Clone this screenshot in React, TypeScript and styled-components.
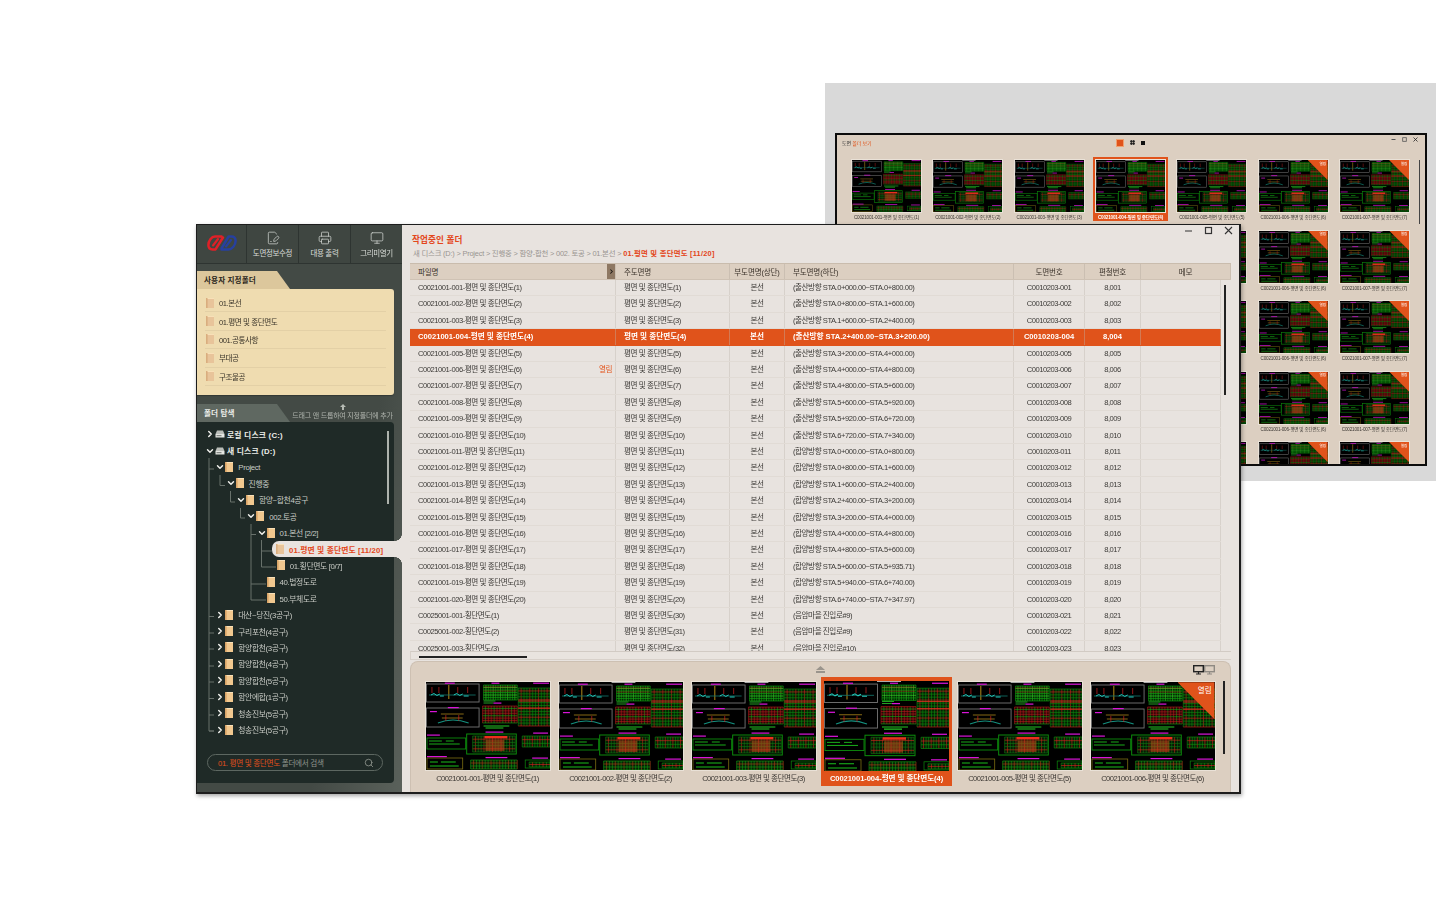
import React from "react";
import styled, { createGlobalStyle } from "styled-components";
import { ChevronDown, ChevronRight, FilePenLine, Monitor, Printer, Search } from "lucide-react";

const FONT = `"Liberation Sans", "Noto Sans CJK KR", sans-serif`;
const ORANGE = "#e0531b";
const CREAM = "#e8e3df";
const TAN = "#dccfc1";

const GlobalStyle = createGlobalStyle`
  html, body { margin: 0; padding: 0; background: #fff; }
  body { font-family: ${FONT}; font-size: 8px; }
  * { box-sizing: border-box; }
`;

const Canvas = styled.div`
  position: relative;
  width: 1450px;
  height: 900px;
  background: #fff;
  overflow: hidden;
`;
const Backdrop = styled.div`
  position: absolute;
  left: 825px;
  top: 83px;
  width: 611px;
  height: 398px;
  background: #d9d9d9;
`;
const HiddenDefs = styled.svg`
  position: absolute;
  width: 0;
  height: 0;
`;

/* ---------- CAD drawing ---------- */
function gridLines(x: number, y: number, w: number, h: number, cols: number, rows: number, c1: string, c2: string) {
  const out: React.ReactElement[] = [];
  for (let i = 0; i <= cols; i++) {
    const px = x + (w * i) / cols;
    out.push(<line key={"c" + i} x1={px} y1={y} x2={px} y2={y + h} stroke={i % 3 === 1 ? c2 : c1} strokeWidth={0.55} />);
  }
  for (let i = 0; i <= rows; i++) {
    const py = y + (h * i) / rows;
    out.push(<line key={"r" + i} x1={x} y1={py} x2={x + w} y2={py} stroke={i % 3 === 1 ? c2 : c1} strokeWidth={0.6} />);
  }
  return (
    <g key={`${x}-${y}`}>
      <rect x={x} y={y} width={w} height={h} fill={c1} opacity={0.22} />
      {out}
    </g>
  );
}

const labels = [
  [19, 0.6, 10], [66, 0.6, 8], [108, 0.6, 16], [22, 25, 11], [4, 29, 7], [68, 20.5, 8],
  [1, 52.5, 13], [60, 49.5, 18], [108, 50.5, 15], [1, 74, 20], [60, 75, 22], [107, 75.5, 16],
];

const CadDefs = () => (
  <HiddenDefs aria-hidden="true">
    <symbol id="cad-sheet" viewBox="0 0 125 88" overflow="visible">
      <rect x="0.5" y="2" width="53" height="18" fill="none" stroke="#767676" strokeWidth="0.9" />
      <rect x="0.5" y="26" width="53" height="19" fill="none" stroke="#767676" strokeWidth="0.9" />
      <path d="M6 5 V11 M13 5 V11 M32 5 V11 M42 5 V11" stroke="#b52020" strokeWidth="0.8" />
      <path d="M23 3 V17" stroke="#b58a18" strokeWidth="1" />
      <path d="M3 13 H50" stroke="#127a70" strokeWidth="0.8" />
      <path d="M5 13 l3 -1.5 l3 2 l3 -1.5 M14 14 h4 M28 13 l3 -1.5 l3 2 l3 -1.5 M38 14 h5" stroke="#27c9bb" strokeWidth="1" fill="none" />
      <path d="M12 41 Q27 35 43 41" stroke="#14907f" strokeWidth="1.1" fill="none" />
      <path d="M15 32 H38 M16 36 H37" stroke="#a8851a" strokeWidth="0.8" />
      <path d="M20 33 V39 M33 33 V39" stroke="#c22" strokeWidth="0.7" />
      {gridLines(58, 3, 34, 15, 14, 6, "#0fa80f", "#3bdc2b")}
      <path d="M58 5 H91 M58 9 H91" stroke="#b8261c" strokeWidth="0.5" />
      <path d="M58 19 H70 M58 21 H68" stroke="#2bc92b" strokeWidth="0.8" />
      {gridLines(57, 24, 35, 17, 12, 7, "#b81c1c", "#12a812")}
      <path d="M58 44 H84 M60 46 H78" stroke="#25c825" strokeWidth="1.1" />
      {gridLines(93, 6, 32, 38, 11, 13, "#0e900e", "#d82020")}
      <path d="M93 19 H125 M93 26 H125" stroke="#e43324" strokeWidth="0.8" />
      <rect x="1" y="56" width="39" height="11" fill="none" stroke="#0c8c0c" strokeWidth="0.9" />
      <path d="M3 59 H16 M3 62 H34 M20 59 H28" stroke="#1bc01b" strokeWidth="0.9" />
      <rect x="41" y="52" width="50" height="20" fill="none" stroke="#0c8c0c" strokeWidth="1" />
      {gridLines(47, 54, 43, 16, 15, 5, "#127c12", "#d02a1a")}
      <rect x="59" y="54" width="23" height="2.4" fill="#ee2e1e" />
      <rect x="60" y="58" width="19" height="11" fill="#c8421a" opacity="0.55" />
      {gridLines(97, 54, 28, 11, 11, 3, "#0f960f", "#e02020")}
      <rect x="1" y="76" width="36" height="11" fill="none" stroke="#7c6e12" strokeWidth="0.8" />
      <path d="M4 80 H12 M15 80 H30 M4 84 H33" stroke="#1bbf1b" strokeWidth="1" />
      {gridLines(45, 78, 47, 9, 16, 3, "#14a014", "#b83a1a")}
      <rect x="100" y="78" width="25" height="8" fill="none" stroke="#0c8c0c" strokeWidth="0.7" />
      {gridLines(104, 80, 21, 5, 6, 2, "#0f960f", "#e02020")}
      {labels.map(([x, y, w], i) => (
        <rect key={i} x={x} y={y} width={w} height={1.2} fill="#d914d9" />
      ))}
    </symbol>
  </HiddenDefs>
);

const SheetSvg = styled.svg`
  display: block;
  width: 100%;
  height: 100%;
  background: #000;
`;
const CadSheet = ({ first }: { first?: boolean }) => (
  <SheetSvg viewBox="0 0 125 88" preserveAspectRatio="none">
    {!first && <rect x="53" y="0" width="24" height="0.9" fill="#bbb" />}
    <use href="#cad-sheet" x="0" y={first ? 0 : 1} width="125" height="88" />
  </SheetSvg>
);

/* ---------- thumbnails ---------- */
const ThumbFrame = styled.div<{ $h: number; $edge: number }>`
  position: relative;
  height: ${(p) => p.$h}px;
  border: ${(p) => p.$edge}px solid #e9e1d7;
  overflow: hidden;
`;
const Corner = styled.div<{ $size: number; $font: number }>`
  position: absolute;
  top: 0;
  right: 0;
  width: ${(p) => p.$size}px;
  height: ${(p) => p.$size}px;
  background: ${ORANGE};
  clip-path: polygon(0 0, 100% 0, 100% 100%);
  color: #fff;
  font-size: ${(p) => p.$font}px;
  text-align: right;
  padding: ${(p) => p.$size * 0.13}px ${(p) => p.$size * 0.08}px 0 0;
  line-height: 1;
`;
const ThumbItem = styled.div<{ $active?: boolean }>`
  width: 131px;
  height: 109px;
  padding: 4px ${(p) => (p.$active ? 3 : 2.5)}px 0;
  background: ${(p) => (p.$active ? ORANGE : "transparent")};
`;
const ThumbLabel = styled.div<{ $active?: boolean }>`
  margin-top: 2px;
  text-align: center;
  white-space: nowrap;
  font-size: 7.6px;
  line-height: 12px;
  letter-spacing: ${(p) => (p.$active ? "-0.08px" : "-0.5px")};
  font-weight: ${(p) => (p.$active ? 700 : 400)};
  color: ${(p) => (p.$active ? "#fff" : "#3b3733")};
`;
const MiniItem = styled.div<{ $active?: boolean }>`
  width: 75px;
  height: 64px;
  padding: 2px 2px 0;
  background: ${(p) => (p.$active ? ORANGE : "transparent")};
`;
const MiniLabel = styled.div<{ $active?: boolean }>`
  margin-top: 1px;
  text-align: center;
  white-space: nowrap;
  font-size: 4.6px;
  line-height: 7px;
  letter-spacing: -0.18px;
  font-weight: ${(p) => (p.$active ? 700 : 400)};
  color: ${(p) => (p.$active ? "#fff" : "#3b3733")};
`;

/* ---------- back window ---------- */
const BackWindow = styled.section`
  position: absolute;
  left: 835px;
  top: 133px;
  width: 592px;
  height: 333px;
  border: 2px solid #0c0c0c;
  background: ${TAN};
  overflow: hidden;
  filter: blur(0.25px);
`;
const BackHeader = styled.header`
  display: grid;
  grid-template-columns: 274px auto 1fr auto;
  align-items: center;
  height: 22px;
  padding: 0 7px 7px 5px;
`;
const BackTitle = styled.div`
  font-size: 5px;
  letter-spacing: -0.1px;
  color: #333;
  white-space: nowrap;
  span { color: ${ORANGE}; }
`;
const ViewSwitch = styled.div`
  display: flex;
  align-items: center;
  gap: 6px;
`;
const ViewActive = styled.span`
  width: 8px;
  height: 8px;
  background: ${ORANGE};
  border: 1px solid #f0a070;
`;
const ViewDots = styled.span`
  width: 5px;
  height: 5px;
  background: radial-gradient(circle, #111 1.1px, transparent 1.2px) 0 0 / 2.5px 2.5px;
`;
const ViewSquare = styled.span`
  width: 4px;
  height: 4px;
  background: #111;
`;
const BackControls = styled.div`
  display: flex;
  align-items: center;
  gap: 6px;
  color: #555;
  margin-bottom: 7px;
`;
const BackGrid = styled.div`
  display: grid;
  grid-template-columns: repeat(7, 75px);
  grid-auto-rows: 64px;
  column-gap: 6.33px;
  row-gap: 6.5px;
  padding-left: 12px;
`;
const BackScroll = styled.div`
  position: absolute;
  left: 582px;
  top: 25px;
  width: 1px;
  height: 64px;
  background: #444;
`;

const BackThumb = ({ n, active, open, label }: { n: number; active?: boolean; open?: boolean; label?: boolean }) => (
  <MiniItem $active={active}>
    <ThumbFrame $h={54} $edge={1}>
      <CadSheet first={n === 1} />
      {open && <Corner $size={20} $font={3.6}>열림</Corner>}
    </ThumbFrame>
    {label && <MiniLabel $active={active}>C0021001-00{n}-평면 및 종단면도({n})</MiniLabel>}
  </MiniItem>
);

const BackView = () => (
  <BackWindow>
    <BackHeader>
      <BackTitle>도면 <span>폴더 보기</span></BackTitle>
      <ViewSwitch>
        <ViewActive />
        <ViewDots />
        <ViewSquare />
      </ViewSwitch>
      <span />
      <BackControls>
        <svg width="5" height="5" viewBox="0 0 5 5" stroke="currentColor"><path d="M0.5 2.5 H4.5" /></svg>
        <svg width="5" height="5" viewBox="0 0 5 5" stroke="currentColor" fill="none"><rect x="0.7" y="0.7" width="3.6" height="3.6" strokeWidth="0.8" /></svg>
        <svg width="5" height="5" viewBox="0 0 5 5" stroke="#222"><path d="M0.5 0.5 L4.5 4.5 M4.5 0.5 L0.5 4.5" strokeWidth="0.8" /></svg>
      </BackControls>
    </BackHeader>
    <BackGrid>
      {Array.from({ length: 35 }).map((_, i) => {
        const col = i % 7;
        const row = Math.floor(i / 7);
        // rows below the first sit behind the front window, only the last two columns show
        const visible = row === 0 || (col >= 5 && row < 4);
        return <BackThumb key={i} n={col + 1} active={i === 3} open={col >= 5} label={visible} />;
      })}
    </BackGrid>
    <BackScroll />
  </BackWindow>
);

/* ---------- front window ---------- */
const FrontWindow = styled.section`
  position: absolute;
  left: 196px;
  top: 224px;
  width: 1045px;
  height: 570px;
  display: flex;
  border: 1px solid #1d1d1d;
  border-width: 1px 2px 2px 1px;
  background: ${CREAM};
  box-shadow: 1px 2px 4px rgba(0, 0, 0, 0.35);
  filter: blur(0.25px);
`;
const Sidebar = styled.aside`
  width: 205px;
  flex: none;
  display: flex;
  flex-direction: column;
  background: linear-gradient(100deg, #434a45 70%, #5a615b);
`;
const Toolbar = styled.div`
  display: grid;
  grid-template-columns: 49px 52px 52px 52px;
  height: 39px;
  background: #3f4641;
  border-bottom: 1px solid #2e3431;
`;
const LogoCell = styled.div`
  display: flex;
  align-items: center;
  justify-content: center;
  padding-bottom: 3px;
`;
const ToolButton = styled.div`
  display: flex;
  flex-direction: column;
  align-items: center;
  padding-top: 6px;
  gap: 4px;
  border-left: 1px solid #2e3431;
  color: #d9ddd8;
  font-size: 7.5px;
  letter-spacing: -0.35px;
  line-height: 9px;
  white-space: nowrap;
  svg { color: #cfd4cf; }
`;
const Tab = styled.div<{ $bg: string; $fg: string }>`
  width: 93px;
  height: 18px;
  padding: 5px 0 0 7px;
  font-size: 7.6px;
  line-height: 10px;
  font-weight: 700;
  letter-spacing: 0.1px;
  white-space: nowrap;
  color: ${(p) => p.$fg};
  background: ${(p) => p.$bg};
  border-top-right-radius: 6px;
  clip-path: polygon(0 0, 86% 0, 100% 100%, 0 100%);
`;
const FavTabRow = styled.div`
  margin-top: 7px;
`;
const FavPanel = styled.div`
  width: 197px;
  height: 106px;
  padding: 5px 8px 0;
  background: #efdcb0;
  border-radius: 0 3px 3px 0;
  box-shadow: 0 1px 1px rgba(0, 0, 0, 0.25);
`;
const FavRow = styled.div`
  display: flex;
  align-items: center;
  gap: 5px;
  height: 18.4px;
  padding-left: 1px;
  border-bottom: 1px solid #e3d0a6;
  color: #3b352a;
  font-size: 7.6px;
  letter-spacing: -0.45px;
`;
const TreeTabRow = styled.div`
  display: flex;
  margin-top: 9px;
`;
const Hint = styled.div`
  flex: 1;
  display: flex;
  flex-direction: column;
  align-items: center;
  color: #aeb3ac;
  font-size: 7px;
  letter-spacing: -0.2px;
  line-height: 9px;
  white-space: nowrap;
  padding-right: 7px;
  svg { display: block; margin-bottom: 1px; }
`;
const TreePanel = styled.div`
  position: relative;
  width: 197px;
  height: 361px;
  display: flex;
  flex-direction: column;
  padding-top: 6px;
  background: #1f2a27;
  border-radius: 0 4px 4px 0;
`;
const TreeLines = styled.svg`
  position: absolute;
  left: 0;
  top: 0;
  width: 197px;
  height: 361px;
  pointer-events: none;
`;
const TreeList = styled.div`
  position: relative;
  flex: 1;
  margin-top: -2px;
`;
const TreeRow = styled.div<{ $depth: number; $selected?: boolean; $strong?: boolean }>`
  position: relative;
  display: flex;
  align-items: center;
  height: 16.42px;
  padding-left: ${(p) => 8 + p.$depth * 10.3}px;
  white-space: nowrap;
  font-size: 7.8px;
  letter-spacing: ${(p) => (p.$strong ? "0.2px" : p.$selected ? "0.12px" : "-0.35px")};
  font-weight: ${(p) => (p.$strong || p.$selected ? 700 : 400)};
  color: ${(p) => (p.$selected ? "#e3461a" : p.$strong ? "#eceee9" : "#c9ccc6")};
  ${(p) =>
    p.$selected &&
    `
    margin-left: 75px;
    margin-right: -8px;
    padding-left: 4px;
    background: ${CREAM};
    border-radius: 7px 0 0 7px;
    &::before, &::after {
      content: "";
      position: absolute;
      right: 0;
      width: 7px;
      height: 7px;
    }
    &::before { top: -7px; background: radial-gradient(circle at 0 0, transparent 6.6px, ${CREAM} 7px); }
    &::after { bottom: -7px; background: radial-gradient(circle at 0 100%, transparent 6.6px, ${CREAM} 7px); }
  `}
`;
const Caret = styled.span`
  flex: none;
  width: 10px;
  display: flex;
  justify-content: center;
  color: #f2f2ee;
`;
const RowLabel = styled.span<{ $tight?: boolean }>`
  margin-left: ${(p) => (p.$tight ? 2 : 5)}px;
`;
const TreeScroll = styled.div`
  position: absolute;
  left: 190px;
  top: 9px;
  width: 2px;
  height: 73px;
  background: #aeb3ad;
`;
const SearchBox = styled.div`
  display: flex;
  align-items: center;
  justify-content: space-between;
  width: 176px;
  height: 17px;
  margin: 0 0 12px 10px;
  padding: 0 8px 0 10px;
  border: 1px solid #5d6761;
  border-radius: 9px;
  font-size: 7.6px;
  letter-spacing: -0.3px;
  color: #8f958e;
  white-space: nowrap;
  b { font-weight: 400; color: #e0501c; }
  svg { color: #8f958e; }
`;

const Main = styled.main`
  position: relative;
  flex: 1;
  min-width: 0;
  display: flex;
  flex-direction: column;
  padding: 0 8px 0 8px;
  background: ${CREAM};
`;
const Heading = styled.div`
  height: 38px;
  padding: 10px 0 0 2px;
`;
const HeadingTitle = styled.div`
  color: #e3461a;
  font-weight: 700;
  font-size: 8.6px;
  line-height: 11px;
  letter-spacing: 0.1px;
`;
const Crumbs = styled.div`
  margin: 3px 0 0 1px;
  color: #989490;
  font-size: 7.4px;
  line-height: 10px;
  letter-spacing: -0.2px;
  white-space: nowrap;
  b { color: #e3461a; letter-spacing: 0.22px; }
`;
const WindowControls = styled.div`
  position: absolute;
  right: 6px;
  top: 1px;
  display: flex;
  gap: 11px;
  color: #333;
`;
const TableBox = styled.div`
  position: relative;
  height: 389px;
  overflow: hidden;
`;
const COLUMNS = "206px 114px 55px 229px 71px 56px 1fr";
const HeadRow = styled.div`
  display: grid;
  grid-template-columns: 206px 114px 55px 229px 71px 56px 90px;
  height: 17px;
  background: ${TAN};
  border-top: 1px solid #c9bcad;
  border-bottom: 1px solid #cfc2b4;
`;
const HeadCell = styled.div<{ $center?: boolean }>`
  display: flex;
  align-items: center;
  justify-content: ${(p) => (p.$center ? "center" : "flex-start")};
  padding-left: ${(p) => (p.$center ? 0 : 8)}px;
  border-right: 1px solid #cbbfb2;
  font-size: 7.6px;
  letter-spacing: -0.2px;
  color: #3b332b;
  white-space: nowrap;
`;
const NameHead = styled(HeadCell)`
  justify-content: space-between;
  padding-right: 0;
`;
const ColToggle = styled.span`
  width: 8px;
  height: 100%;
  display: flex;
  align-items: center;
  justify-content: center;
  background: #8e7863;
  color: #1b1612;
`;
const DataRow = styled.div<{ $active?: boolean }>`
  display: grid;
  grid-template-columns: ${COLUMNS};
  width: 811px;
  height: 16.42px;
  background: ${(p) => (p.$active ? ORANGE : "transparent")};
  border-bottom: 1px solid ${(p) => (p.$active ? ORANGE : "#e1dbd5")};
  color: ${(p) => (p.$active ? "#fff" : "#3c3a37")};
  font-weight: ${(p) => (p.$active ? 700 : 400)};
  font-size: 7.6px;
  letter-spacing: ${(p) => (p.$active ? "0" : "-0.46px")};
  line-height: 16px;
`;
const Cell = styled.div<{ $center?: boolean }>`
  display: flex;
  justify-content: ${(p) => (p.$center ? "center" : "space-between")};
  padding: ${(p) => (p.$center ? "0" : "0 3px 0 8px")};
  border-right: 1px solid rgba(190, 182, 172, 0.4);
  white-space: nowrap;
  overflow: hidden;
  em { font-style: normal; color: #e3561f; }
`;
const TableScroll = styled.div`
  position: absolute;
  right: 5px;
  top: 22px;
  width: 2px;
  height: 110px;
  background: #222;
`;
const HScroll = styled.div`
  height: 9px;
  padding: 4px 0 0 8px;
  background: #e9e4df;
  border-top: 1px solid #d2cbc4;
  border-bottom: 1px solid #d8d1ca;
  border-left: 1px solid #d8d1ca;
  width: 821px;
`;
const HScrollThumb = styled.div`
  width: 108px;
  height: 1.5px;
  background: #222;
`;
const ThumbPanel = styled.div`
  position: relative;
  height: 131px;
  margin-top: 1px;
  background: ${TAN};
  border: 1px solid #cdc0b2;
  border-bottom: 0;
  border-radius: 8px 8px 0 0;
`;
const PanelTop = styled.div`
  display: grid;
  grid-template-columns: 1fr auto 1fr;
  align-items: center;
  height: 15px;
`;
const Eject = styled.svg`
  grid-column: 2;
  width: 9px;
  height: 7px;
`;
const ScreenPair = styled.div`
  justify-self: end;
  display: flex;
  margin-right: 15px;
  svg:first-child { color: #222; }
  svg:last-child { color: #8f8a83; }
`;
const ThumbStrip = styled.div`
  display: flex;
  gap: 2px;
  padding-left: 11px;
`;
const PanelScroll = styled.div`
  position: absolute;
  right: 5px;
  top: 19px;
  width: 2px;
  height: 73px;
  background: #222;
`;

const FolderSvg = styled.svg`
  flex: none;
  display: block;
`;
const Folder = ({ soft }: { soft?: boolean }) => (
  <FolderSvg width="8" height="10" viewBox="0 0 8 10">
    <rect width="8" height="10" fill={soft ? "#e8c49a" : "#f1c88f"} />
    <rect width="1.6" height="10" fill={soft ? "#d9ad7e" : "#d9a468"} />
    <rect x="1.6" y="0" width="6.4" height="1" fill="#f8e0b8" />
  </FolderSvg>
);
const Disk = () => (
  <FolderSvg width="10" height="8" viewBox="0 0 10 8">
    <path d="M2 0.5 H8 L9.5 4 H0.5 Z" fill="#b9bdb8" />
    <rect x="0.5" y="4" width="9" height="3.5" fill="#e4e6e2" />
    <rect x="1.5" y="5.2" width="5" height="1" fill="#6b716c" />
  </FolderSvg>
);
const Logo = () => (
  <svg width="30" height="16" viewBox="0 0 30 16" fill="none" strokeLinejoin="round" strokeLinecap="round">
    <path d="M14.5 1.6 H8 C4.5 1.6 1.4 6 1.4 10 C1.4 13 3 14.4 5.6 14.4 H8.5 L16 2.5" stroke="#e02027" strokeWidth="2.5" />
    <path d="M6 10.5 L11 4" stroke="#e02027" strokeWidth="2.1" />
    <path d="M14.5 14.4 H21.5 C25 14.4 28.6 10 28.6 6 C28.6 3 27 1.6 24.4 1.6 H21.5 L14.5 13.5" stroke="#27409f" strokeWidth="2.5" />
    <path d="M19 11.5 L24 5" stroke="#27409f" strokeWidth="2.1" />
  </svg>
);
const Screen = () => (
  <svg width="11" height="10" viewBox="0 0 11 10" fill="none" stroke="currentColor">
    <rect x="0.7" y="0.7" width="9.6" height="6" strokeWidth="1.4" />
    <path d="M3 9 H8 M5.5 7 V9" strokeWidth="1.2" />
  </svg>
);

const favourites = ["01.본선", "01.평면 및 종단면도", "001.공통사항", "부대공", "구조물공"];

type Node = { label: string; depth: number; open?: boolean; leaf?: boolean; disk?: boolean; selected?: boolean };
const tree: Node[] = [
  { label: "로컬 디스크 (C:)", depth: 0, disk: true },
  { label: "새 디스크 (D:)", depth: 0, disk: true, open: true },
  { label: "Project", depth: 1, open: true },
  { label: "진행중", depth: 2, open: true },
  { label: "함양~합천4공구", depth: 3, open: true },
  { label: "002.토공", depth: 4, open: true },
  { label: "01.본선 [2/2]", depth: 5, open: true },
  { label: "01.평면 및 종단면도 [11/20]", depth: 6, leaf: true, selected: true },
  { label: "01.횡단면도 [0/7]", depth: 6, leaf: true },
  { label: "40.법정도로", depth: 5, leaf: true },
  { label: "50.부체도로", depth: 5, leaf: true },
  { label: "대산~당진(3공구)", depth: 1 },
  { label: "구리포천(4공구)", depth: 1 },
  { label: "함양합천(3공구)", depth: 1 },
  { label: "함양합천(4공구)", depth: 1 },
  { label: "함양합천(5공구)", depth: 1 },
  { label: "함안에합(1공구)", depth: 1 },
  { label: "청송진보(5공구)", depth: 1 },
  { label: "청송진보(5공구)", depth: 1 },
];

const sta = (from: string, to: string) => `STA.${from}~STA.${to}`;
const lower = [
  `(출산방향 ${sta("0+000.00", "0+800.00")})`,
  `(출산방향 ${sta("0+800.00", "1+600.00")})`,
  `(출산방향 ${sta("1+600.00", "2+400.00")})`,
  `(출산방향 ${sta("2+400.00", "3+200.00")})`,
  `(출산방향 ${sta("3+200.00", "4+000.00")})`,
  `(출산방향 ${sta("4+000.00", "4+800.00")})`,
  `(출산방향 ${sta("4+800.00", "5+600.00")})`,
  `(출산방향 ${sta("5+600.00", "5+920.00")})`,
  `(출산방향 ${sta("5+920.00", "6+720.00")})`,
  `(출산방향 ${sta("6+720.00", "7+340.00")})`,
  `(합양방향 ${sta("0+000.00", "0+800.00")})`,
  `(합양방향 ${sta("0+800.00", "1+600.00")})`,
  `(합양방향 ${sta("1+600.00", "2+400.00")})`,
  `(합양방향 ${sta("2+400.00", "3+200.00")})`,
  `(합양방향 ${sta("3+200.00", "4+000.00")})`,
  `(합양방향 ${sta("4+000.00", "4+800.00")})`,
  `(합양방향 ${sta("4+800.00", "5+600.00")})`,
  `(합양방향 ${sta("5+600.00", "5+935.71")})`,
  `(합양방향 ${sta("5+940.00", "6+740.00")})`,
  `(합양방향 ${sta("6+740.00", "7+347.97")})`,
  "(음암마을 진입로#9)",
  "(음암마을 진입로#9)",
  "(음암마을 진입로#10)",
];
const pad = (n: number) => String(n).padStart(3, "0");
const rows = lower.map((text, i) => {
  const n = i + 1;
  const late = n > 20;
  return {
    file: late ? `C0025001-${pad(n - 20)}-횡단면도(${n - 20})` : `C0021001-${pad(n)}-평면 및 종단면도(${n})`,
    main: `평면 및 종단면도(${late ? n + 9 : n})`,
    upper: "본선",
    lower: text,
    code: `C0010203-${pad(n)}`,
    serial: `8,${pad(n)}`,
    open: n === 6,
  };
});

const TreeConnectors = () => {
  const x = (v: number) => v - 197;
  const y = (v: number) => v - 421;
  const branch = (vx: number, from: number, to: number, endX: number) =>
    `M${x(vx)} ${y(from)} V${y(to)} H${x(endX)}`;
  const stubs = [468, 615.5, 632, 648, 665, 681, 697.5, 714, 730];
  return (
    <TreeLines fill="none" stroke="#68716b" strokeWidth="1">
      <path d={branch(209, 457, 730, 214)} />
      {stubs.map((v) => (
        <path key={v} d={`M${x(209)} ${y(v)} H${x(214)}`} />
      ))}
      <path d={branch(220, 474, 484.5, 225)} />
      <path d={branch(230.5, 490, 501, 235)} />
      <path d={branch(240.5, 507, 517, 245)} />
      <path d={branch(251, 523, 599, 266)} />
      <path d={`M251 533.5 H256 M251 583 H266`} transform={`translate(-197 -421)`} />
      <path d={branch(261.5, 539, 566, 276)} />
      <path d={`M261.5 550 H272`} transform={`translate(-197 -421)`} />
    </TreeLines>
  );
};

const Row = ({ node }: { node: Node }) => (
  <TreeRow $depth={node.depth} $selected={node.selected} $strong={node.disk}>
    {!node.leaf && (
      <Caret>
        {node.open ? <ChevronDown size={10} strokeWidth={3.4} /> : <ChevronRight size={10} strokeWidth={3.4} />}
      </Caret>
    )}
    {node.leaf && !node.selected && <Caret />}
    {node.disk ? <Disk /> : <Folder soft={node.selected} />}
    <RowLabel $tight={node.disk}>{node.label}</RowLabel>
  </TreeRow>
);

const FrontView = () => (
  <FrontWindow>
    <Sidebar>
      <Toolbar>
        <LogoCell><Logo /></LogoCell>
        <ToolButton><FilePenLine size={14} strokeWidth={1.3} />도면정보수정</ToolButton>
        <ToolButton><Printer size={14} strokeWidth={1.3} />대용 출력</ToolButton>
        <ToolButton><Monitor size={14} strokeWidth={1.3} />그리미열기</ToolButton>
      </Toolbar>
      <FavTabRow>
        <Tab $bg="#dcc79c" $fg="#2c2820">사용자 지정폴더</Tab>
      </FavTabRow>
      <FavPanel>
        {favourites.map((f) => (
          <FavRow key={f}><Folder soft />{f}</FavRow>
        ))}
      </FavPanel>
      <TreeTabRow>
        <Tab $bg="#5f6861" $fg="#eceee9">폴더 탐색</Tab>
        <Hint>
          <svg width="6" height="6" viewBox="0 0 6 6" fill="#b5bab3"><path d="M3 0 L6 3 H4 V6 H2 V3 H0 Z" /></svg>
          드래그 앤 드롭하여 지정폴더에 추가
        </Hint>
      </TreeTabRow>
      <TreePanel>
        <TreeConnectors />
        <TreeList>
          {tree.map((node, i) => (
            <Row key={i} node={node} />
          ))}
        </TreeList>
        <TreeScroll />
        <SearchBox>
          <span><b>01. 평면 및 종단면도</b> 폴더에서 검색</span>
          <Search size={10} strokeWidth={2} />
        </SearchBox>
      </TreePanel>
    </Sidebar>
    <Main>
      <WindowControls>
        <svg width="9" height="9" viewBox="0 0 9 9" stroke="currentColor"><path d="M1 5 H8" /></svg>
        <svg width="9" height="9" viewBox="0 0 9 9" stroke="currentColor" fill="none"><rect x="1.5" y="1.5" width="6" height="6" strokeWidth="1.2" /></svg>
        <svg width="9" height="9" viewBox="0 0 9 9" stroke="currentColor"><path d="M1 1 L8 8 M8 1 L1 8" strokeWidth="1.1" /></svg>
      </WindowControls>
      <Heading>
        <HeadingTitle>작업중인 폴더</HeadingTitle>
        <Crumbs>
          새 디스크 (D:) &gt; Project &gt; 진행중 &gt; 함양-합천 &gt; 002. 토공 &gt; 01.본선 &gt; <b>01.평면 및 종단면도 [11/20]</b>
        </Crumbs>
      </Heading>
      <TableBox>
        <HeadRow>
          <NameHead>
            파일명
            <ColToggle><ChevronRight size={7} strokeWidth={3.5} /></ColToggle>
          </NameHead>
          <HeadCell>주도면명</HeadCell>
          <HeadCell $center>부도면명(상단)</HeadCell>
          <HeadCell>부도면명(하단)</HeadCell>
          <HeadCell $center>도면번호</HeadCell>
          <HeadCell $center>편철번호</HeadCell>
          <HeadCell $center>메모</HeadCell>
        </HeadRow>
        {rows.map((r, i) => (
          <DataRow key={r.code} $active={i === 3}>
            <Cell>{r.file}{r.open && <em>열림</em>}</Cell>
            <Cell>{r.main}</Cell>
            <Cell $center>{r.upper}</Cell>
            <Cell>{r.lower}</Cell>
            <Cell $center>{r.code}</Cell>
            <Cell $center>{r.serial}</Cell>
            <Cell />
          </DataRow>
        ))}
        <TableScroll />
      </TableBox>
      <HScroll><HScrollThumb /></HScroll>
      <ThumbPanel>
        <PanelTop>
          <Eject viewBox="0 0 9 7" fill="#9a948c"><path d="M4.5 0 L9 4 H0 Z M0 5 H9 V7 H0 Z" /></Eject>
          <ScreenPair><Screen /><Screen /></ScreenPair>
        </PanelTop>
        <ThumbStrip>
          {[1, 2, 3, 4, 5, 6].map((n) => (
            <ThumbItem key={n} $active={n === 4}>
              <ThumbFrame $h={90} $edge={n === 4 ? 0 : 1}>
                <CadSheet first={n === 1} />
                {n === 6 && <Corner $size={37} $font={7.5}>열림</Corner>}
              </ThumbFrame>
              <ThumbLabel $active={n === 4}>C0021001-00{n}-평면 및 종단면도({n})</ThumbLabel>
            </ThumbItem>
          ))}
        </ThumbStrip>
        <PanelScroll />
      </ThumbPanel>
    </Main>
  </FrontWindow>
);

export default function App() {
  return (
    <Canvas>
      <GlobalStyle />
      <CadDefs />
      <Backdrop />
      <BackView />
      <FrontView />
    </Canvas>
  );
}
